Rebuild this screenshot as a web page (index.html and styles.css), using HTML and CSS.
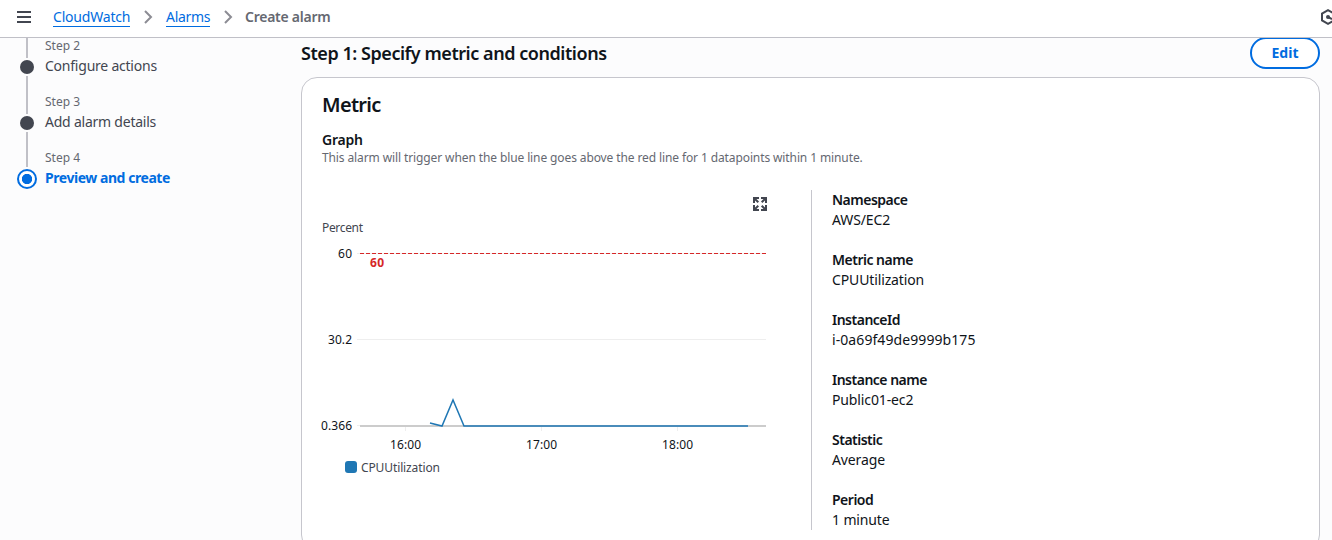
FILE: index.html
```html
<!DOCTYPE html>
<html lang="en">
<head>
<meta charset="utf-8">
<title>Create alarm</title>
<link rel="stylesheet" href="styles.css">
</head>
<body>
<header class="topbar">
  <svg class="menu-icon" width="16" height="16" viewBox="0 0 16 16"><path d="M1 3h14M1 8h14M1 13h14"/></svg>
  <nav class="crumbs">
    <a class="crumb w-cloudwatch" href="#">CloudWatch</a>
    <svg class="chevron" width="16" height="16" viewBox="0 0 16 16"><path d="M5 2l6 6-6 6"/></svg>
    <a class="crumb w-alarms" href="#">Alarms</a>
    <svg class="chevron" width="16" height="16" viewBox="0 0 16 16"><path d="M5 2l6 6-6 6"/></svg>
    <span class="crumb-current">Create alarm</span>
  </nav>
  <svg class="hex-icon" width="16" height="16" viewBox="0 0 16 16"><path d="M14 5V4.600L8 1.100 2 4.600v6.800l6 3.500 6-3.500V8"/><path d="M8 8l4 2"/><circle cx="8" cy="8" r="2"/></svg>
</header>
<div class="layout">
  <aside class="steps">
    <div class="step">
      <div class="rail"><i class="line line-first"></i><i class="dot"></i><i class="line line-rest"></i></div>
      <div class="step-text"><span class="step-no">Step 2</span><span class="step-name">Configure actions</span></div>
    </div>
    <div class="step">
      <div class="rail"><i class="line line-first"></i><i class="dot"></i><i class="line line-rest"></i></div>
      <div class="step-text"><span class="step-no">Step 3</span><span class="step-name">Add alarm details</span></div>
    </div>
    <div class="step">
      <div class="rail"><i class="line line-last"></i><i class="dot dot-active"></i></div>
      <div class="step-text"><span class="step-no">Step 4</span><span class="step-name active">Preview and create</span></div>
    </div>
  </aside>
  <main class="main">
    <div class="section-head">
      <h2 class="section-title">Step 1: Specify metric and conditions</h2>
      <button class="edit">Edit</button>
    </div>
    <section class="card">
      <h3 class="card-title">Metric</h3>
      <div class="label">Graph</div>
      <p class="hint">This alarm will trigger when the blue line goes above the red line for 1 datapoints within 1 minute.</p>
      <div class="columns">
        <div class="graph">
          <svg class="chart" width="470" height="300" viewBox="0 0 470 300">
            <g class="expand" transform="translate(431 7)">
              <path d="M1 6V1h5M8 1h5v5M13 8v5H8M6 13H1V8"/>
              <path d="M1.500 1.500L5.300 5.300M12.500 1.500L8.700 5.300M12.500 12.500L8.700 8.700M1.500 12.500L5.300 8.700"/>
            </g>
            <path class="grid" d="M35 63.500h409M35 149.500h409M35 235.500h5M83.500 237v4M219.500 237v4M355.500 237v4"/>
            <path class="axis" d="M38 236h406"/>
            <path class="threshold" d="M38 63.500h406"/>
            <path class="series" d="M108 233l12 3 11-26 11 26h284"/>
            <text class="unit" x="0" y="42" textLength="41">Percent</text>
            <text x="16" y="68" textLength="14">60</text>
            <text class="limit" x="48" y="77" textLength="14">60</text>
            <text x="6" y="154" textLength="24">30.2</text>
            <text x="-1" y="240" textLength="31">0.366</text>
            <text x="68" y="259" textLength="31">16:00</text>
            <text x="204" y="259" textLength="31">17:00</text>
            <text x="340" y="259" textLength="31">18:00</text>
            <rect class="swatch" x="23" y="271" width="12" height="12" rx="3"/>
            <text class="unit" x="39" y="282" textLength="79">CPUUtilization</text>
          </svg>
        </div>
        <dl class="details">
          <div class="pair"><dt>Namespace</dt><dd>AWS/EC2</dd></div>
          <div class="pair"><dt>Metric name</dt><dd>CPUUtilization</dd></div>
          <div class="pair"><dt>InstanceId</dt><dd class="instance-id">i-0a69f49de9999b175</dd></div>
          <div class="pair"><dt>Instance name</dt><dd>Public01-ec2</dd></div>
          <div class="pair"><dt>Statistic</dt><dd>Average</dd></div>
          <div class="pair"><dt>Period</dt><dd>1 minute</dd></div>
        </dl>
      </div>
    </section>
  </main>
</div>
</body>
</html>
```
FILE: styles.css
```css
* { box-sizing: border-box; }
html, body { height: 100%; }
body {
  margin: 0;
  overflow: hidden;
  background: #fcfcfd;
  color: #0f141a;
  font: 14px/20px "Noto Sans", "Open Sans", sans-serif;
}
h2, h3, p, dl, dd { margin: 0; }
svg { display: block; flex: none; overflow: visible; }

.topbar {
  display: flex;
  align-items: center;
  width: 1336px;
  height: 38px;
  padding: 0 0 3px 16px;
  background: #fff;
  border-bottom: 1px solid #c0c0c7;
}
.menu-icon { fill: none; stroke: #424650; stroke-width: 2; }
.crumbs { display: flex; align-items: center; margin-left: 21px; }
.crumb {
  height: 19px;
  line-height: 17px;
  color: #006ce0;
  text-decoration: none;
  border-bottom: 1px solid #006ce0;
  letter-spacing: -0.2px;
  white-space: nowrap;
}
.w-cloudwatch { width: 77px; }
.w-alarms { width: 44px; letter-spacing: -0.3px; }
.chevron { margin: 0 10px; fill: none; stroke: #8c8c94; stroke-width: 2; }
.crumb-current { margin-left: -1px; color: #656871; font-weight: 600; letter-spacing: -0.25px; }
.hex-icon { margin-left: auto; fill: none; stroke: #424650; stroke-width: 2; }
.hex-icon circle { fill: #424650; stroke: none; }

.layout { display: flex; height: 502px; overflow: hidden; }
.steps { width: 301px; padding-left: 17px; flex: none; }
.step { display: flex; height: 56px; }
.rail { display: flex; flex-direction: column; align-items: center; width: 20px; }
.line { width: 2px; background: #c0c0c7; }
.line-first { height: 20px; }
.line-last { height: 17px; }
.line-rest { flex: 1; }
.dot { width: 14px; height: 14px; margin: 2px 0; border-radius: 50%; background: #424650; }
.dot-active {
  width: 20px;
  height: 20px;
  margin: 2px 0 0;
  border: 2px solid #006ce0;
  background: radial-gradient(circle, #006ce0 4.800px, #fff 5.500px);
}
.step-text { display: flex; flex-direction: column; margin-left: 8px; white-space: nowrap; }
.step-no { font-size: 12px; line-height: 16px; color: #656871; }
.step-name { margin-top: 2px; color: #424650; letter-spacing: -0.23px; }
.active { color: #006ce0; font-weight: 700; letter-spacing: -0.45px; }

.main { width: 1019px; flex: none; }
.section-head { display: flex; justify-content: space-between; height: 39px; }
.section-title { margin-top: 3px; font-size: 18px; line-height: 24px; font-weight: 600; letter-spacing: -0.45px; }
.edit {
  width: 70px;
  height: 32px;
  margin-top: -1px;
  border: 2px solid #006ce0;
  border-radius: 20px;
  background: #fff;
  color: #006ce0;
  font: 700 14px/20px "Noto Sans", sans-serif;
}
.card {
  height: 474px;
  padding: 15px 20px 0;
  border: 1px solid #c6c6cd;
  border-radius: 16px;
  background: #fff;
}
.card-title { font-size: 20px; line-height: 24px; font-weight: 600; letter-spacing: -0.7px; }
.label { margin-top: 13px; font-weight: 600; line-height: 20px; letter-spacing: -0.2px; }
.hint { font-size: 12px; line-height: 16px; color: #656871; letter-spacing: -0.11px; white-space: nowrap; }
.columns { display: flex; margin-top: 24px; }
.graph { width: 489px; flex: none; }
.details {
  display: grid;
  gap: 20px;
  height: 340px;
  padding-left: 20px;
  border-left: 1px solid #c6c6cd;
}
.pair { height: 40px; white-space: nowrap; }
dt { font-weight: 600; letter-spacing: -0.5px; }
dd { letter-spacing: -0.13px; }
.instance-id { letter-spacing: 0.08px; }

.chart text { font-size: 12px; fill: #0f141a; }
.chart .unit { fill: #424650; }
.chart .limit { fill: #d62728; font-weight: 700; }
.chart path { fill: none; }
.chart .grid { stroke: #eee; }
.chart .axis { stroke: #ccc; stroke-width: 2; }
.chart .threshold { stroke: #d62728; stroke-dasharray: 4 2; }
.chart .series { stroke: #1f77b4; stroke-width: 1.500; }
.swatch { fill: #1f77b4; }
.expand path { stroke: #424650; stroke-width: 2; }
```
